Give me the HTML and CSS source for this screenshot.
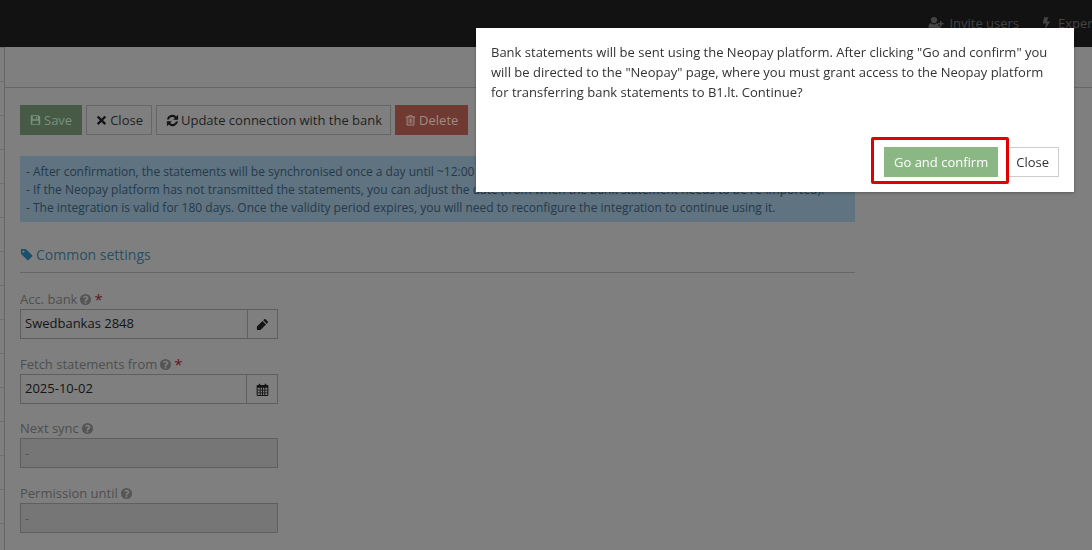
FILE: index.html
```html
<!DOCTYPE html>
<html lang="en">
<head>
<meta charset="utf-8">
<title>Bank integration</title>
<link rel="stylesheet" href="styles.css">
</head>
<body>
<svg class="sprites" aria-hidden="true">
  <symbol id="i-save" viewBox="0 0 14 14"><path fill-rule="evenodd" d="M1 1h10l2 2v10H1zM3.500 2v4h6.500V2zM7.500 2.700h1.500v2.600H7.500zM3 8v4h8V8z"/></symbol>
  <symbol id="i-times" viewBox="0 0 14 14"><path d="M3.200 1.500 7 5.300l3.800-3.800 2.100 2.100L9.100 7.400l3.800 3.800-2.100 2.100L7 9.500l-3.800 3.800-2.100-2.100 3.800-3.800-3.800-3.800z"/></symbol>
  <symbol id="i-refresh" viewBox="0 0 14 14"><path d="M13 .8v5.400H7.600l2-2A4 4 0 0 0 3.200 5.800H.9a6.200 6.200 0 0 1 10.300-3.200zM1 13.200V7.800h5.400l-2 2a4 4 0 0 0 6.400-1.600h2.300a6.200 6.200 0 0 1-10.300 3.200z"/></symbol>
  <symbol id="i-trash" viewBox="0 0 14 14"><path fill-rule="evenodd" d="M5 .8h4l1 1.700h3v1.300h-1V13a1 1 0 0 1-1 1H3a1 1 0 0 1-1-1V3.800H1V2.500h3zM5.700 1.800l-.4.700h3.400l-.4-.7zM3.300 3.800v8.900h7.400V3.800zM4.700 5.200h1v6.200h-1zM6.500 5.200h1v6.200h-1zM8.300 5.200h1v6.200h-1z"/></symbol>
  <symbol id="i-tag" viewBox="0 0 14 14"><path fill-rule="evenodd" d="M1 1h5.200l6.800 6.800a1 1 0 0 1 0 1.400l-3.800 3.800a1 1 0 0 1-1.400 0L1 6.200zM3.800 2.600a1.200 1.200 0 1 0 0 2.400 1.200 1.200 0 0 0 0-2.400z"/></symbol>
  <symbol id="i-help" viewBox="0 0 14 14"><path fill-rule="evenodd" d="M7 1a6 6 0 1 1 0 12A6 6 0 0 1 7 1zM6 9.500v1.700h1.900V9.500zM7.100 3C5.800 3 4.900 3.600 4.300 4.600l1.200.9c.4-.5.800-.9 1.500-.9.600 0 1 .3 1 .8 0 .5-.4.800-.9 1.100C6.500 6.900 6 7.400 6 8.200v.6h1.900c0-.6.300-.9.900-1.200.7-.4 1.300-1 1.300-2.100C10.100 4 8.700 3 7.100 3z"/></symbol>
  <symbol id="i-pencil" viewBox="0 0 14 14"><path d="M10.300 1.300 12.700 3.700a1 1 0 0 1 0 1.400l-1.100 1.100L7.800 2.400l1.100-1.100a1 1 0 0 1 1.400 0zM7 3.200l3.800 3.800-6 6H1v-3.800z"/></symbol>
  <symbol id="i-calendar" viewBox="0 0 14 14"><path fill-rule="evenodd" d="M3 .8h1.600v1.300h4.800V.8H11v1.300h1.300a1 1 0 0 1 1 1V13a1 1 0 0 1-1 1H1.700a1 1 0 0 1-1-1V3.100a1 1 0 0 1 1-1H3zM1.800 5.200v2h2.200v-2zM5 5.200v2h1.500v-2zM7.500 5.200v2H9v-2zM10 5.200v2h2.200v-2zM1.800 8.100v2h2.200v-2zM5 8.100v2h1.500v-2zM7.500 8.100v2H9v-2zM10 8.100v2h2.200v-2zM1.800 11v2h2.200v-2zM5 11v2h1.500v-2zM7.500 11v2H9v-2zM10 11v2h2.200v-2z"/></symbol>
  <symbol id="i-user-plus" viewBox="0 0 16 14"><path d="M6 1a3 3 0 1 1 0 6.200A3 3 0 0 1 6 1zM3.200 7.200C4 8 5 8.400 6 8.400s2-.4 2.800-1.200c.6 0 1.100.3 1.400.7v2h2.300v1.500c-.3 1-1 1.600-2 1.600H2.500c-1.200 0-2-.7-2-1.900 0-1.900.6-3.900 2.700-3.900zM12 5h1.500v2H15.500v1.500h-2v2H12v-2h-2V7h2z"/></symbol>
  <symbol id="i-bolt" viewBox="0 0 10 14"><path d="M2.500 0h4.800L5.300 4.700h3.900L3 14l1.700-7H.8z"/></symbol>
</svg>

<div class="page">
  <header class="topbar">
    <a class="topbar-link"><svg class="ic-user"><use href="#i-user-plus"/></svg>Invite users</a>
    <a class="topbar-link"><svg class="ic-bolt"><use href="#i-bolt"/></svg>Expenses</a>
  </header>
  <div class="shell">
    <div class="rail"></div>
    <div class="workspace">
      <div class="subbar"></div>
      <main class="content">
        <div class="toolbar">
          <button class="btn btn-save"><svg class="ic"><use href="#i-save"/></svg>Save</button>
          <button class="btn btn-plain"><svg class="ic ic-dark"><use href="#i-times"/></svg>Close</button>
          <button class="btn btn-plain"><svg class="ic ic-dark ic-wide"><use href="#i-refresh"/></svg>Update connection with the bank</button>
          <button class="btn btn-delete"><svg class="ic"><use href="#i-trash"/></svg>Delete</button>
        </div>
        <div class="alert">
          <div>- After confirmation, the statements will be synchronised once a day until ~12:00</div>
          <div>- If the Neopay platform has not transmitted the statements, you can adjust the date (from when the bank statement needs to be re-imported).</div>
          <div>- The integration is valid for 180 days. Once the validity period expires, you will need to reconfigure the integration to continue using it.</div>
        </div>
        <h2 class="section"><svg class="ic-tag"><use href="#i-tag"/></svg>Common settings</h2>
        <div class="field">
          <label class="label">Acc. bank<svg class="ic-help"><use href="#i-help"/></svg><span class="req">*</span></label>
          <div class="input-group"><span class="input">Swedbankas 2848</span><span class="addon"><svg class="ic-addon"><use href="#i-pencil"/></svg></span></div>
        </div>
        <div class="field">
          <label class="label">Fetch statements from<svg class="ic-help"><use href="#i-help"/></svg><span class="req">*</span></label>
          <div class="input-group"><span class="input">2025-10-02</span><span class="addon addon-wide"><svg class="ic-addon"><use href="#i-calendar"/></svg></span></div>
        </div>
        <div class="field field-tight">
          <label class="label">Next sync<svg class="ic-help"><use href="#i-help"/></svg></label>
          <div class="input-group input-group-off"><span class="input input-off">-</span></div>
        </div>
        <div class="field">
          <label class="label">Permission until<svg class="ic-help"><use href="#i-help"/></svg></label>
          <div class="input-group input-group-off"><span class="input input-off">-</span></div>
        </div>
      </main>
    </div>
  </div>
</div>

<div class="modal">
  <p class="modal-text">Bank statements will be sent using the Neopay platform. After clicking "Go and confirm" you will be directed to the "Neopay" page, where you must grant access to the Neopay platform for transferring bank statements to B1.lt. Continue?</p>
  <div class="modal-footer">
    <button class="btn btn-confirm">Go and confirm<span class="marker"></span></button>
    <button class="btn btn-close">Close</button>
  </div>
</div>
</body>
</html>
```

FILE: styles.css
```css
* { box-sizing: border-box; }
html, body { margin: 0; height: 100%; overflow: hidden; }
body {
  font-family: "Open Sans", sans-serif;
  font-size: 13px;
  line-height: 20px;
  color: #1a1a1a;
  background: #7f7f7f;
}
.sprites { display: none; }
.page { height: 550px; overflow: hidden; }

.topbar {
  height: 47px;
  background: #121212;
  display: flex;
  justify-content: flex-end;
  align-items: center;
  padding-bottom: 1px;
  overflow: hidden;
  white-space: nowrap;
  margin-right: -23px;
}
.topbar-link { color: #444; display: flex; align-items: center; margin-left: 23px; }
.ic-user { width: 16px; height: 14px; margin-right: 5px; fill: #444; }
.ic-bolt { width: 9px; height: 13px; margin-right: 7px; fill: #444; }

.shell { display: flex; }
.rail {
  width: 5px;
  height: 503px;
  flex: none;
  border-right: 1px solid #666;
  background: linear-gradient(to bottom, transparent 33px, #6e6e6e 33px) 0 1px / 100% 34px;
}
.workspace { flex: 1; }
.subbar { height: 41px; border-bottom: 1px solid #666; }
.content { padding: 17px 0 0 15px; width: 850px; }

.toolbar { display: flex; gap: 4px; }
.btn {
  font: inherit;
  height: 30px;
  padding: 0 9px;
  display: flex;
  align-items: center;
  border: 1px solid #666;
  background: transparent;
  color: #1f1f1f;
  white-space: nowrap;
}
.btn-plain { padding-right: 8px; }
.btn-save { background: #465a45; border-color: #465a45; color: #7c917c; }
.btn-delete { background: #6e3a31; border-color: #6e3a31; color: #a38a86; }
.btn .ic { width: 11px; height: 12px; margin-right: 3px; fill: currentColor; flex: none; }
.btn .ic-dark { fill: #141414; }
.btn .ic-wide { width: 13px; height: 13px; margin-right: 2px; }

.alert {
  margin-top: 21px;
  height: 66px;
  padding: 7px 6px 0;
  font-size: 12px;
  line-height: 18px;
  background: #5f7380;
  color: #26394a;
  white-space: nowrap;
  overflow: hidden;
}

.section {
  margin: 20px 0 0;
  padding-bottom: 5px;
  height: 31px;
  border-bottom: 1px solid #666;
  font-size: 14px;
  font-weight: 400;
  line-height: 24px;
  color: #284f63;
  display: flex;
  align-items: center;
}
.ic-tag { width: 13px; height: 13px; margin-right: 3px; fill: #1b4f6b; flex: none; }

.field { margin-top: 15px; }
.field-tight { margin-top: 14px; }
.section + .field { margin-top: 16px; }
.label { display: flex; align-items: center; height: 20px; color: #4e4e4e; }
.ic-help { width: 13px; height: 13px; margin-left: 2px; fill: #555; }
.req { color: #631620; margin-left: 2px; font-size: 15px; line-height: 20px; }
.input-group { display: flex; width: 258px; height: 30px; border: 1px solid #5f5f5f; }
.input-group-off { background: #767676; }
.input { flex: 1; padding: 0 4px; line-height: 26px; color: #141414; }
.input-off { color: #555; line-height: 28px; }
.addon { width: 30px; border-left: 1px solid #5f5f5f; display: flex; align-items: center; justify-content: center; }
.addon-wide { width: 31px; }
.ic-addon { width: 13px; height: 13px; fill: #141414; }

.modal {
  position: fixed;
  left: 476px;
  top: 28px;
  width: 598px;
  height: 164px;
  background: #fff;
  padding: 15px;
  display: flex;
  flex-direction: column;
  justify-content: space-between;
  box-shadow: 0 1px 3px rgba(0, 0, 0, .3);
}
.modal-text { margin: 0; line-height: 19.900px; color: #333; }
.modal-footer { display: flex; justify-content: flex-end; gap: 8px; }
.btn-confirm { position: relative; background: #8ab783; border-color: #8ab783; color: #fff; }
.btn-close { border-color: #ccc; color: #333; }
.marker {
  position: absolute;
  left: -14px;
  top: -11px;
  width: 138px;
  height: 47px;
  border: 3px solid #e00000;
  border-radius: 2px;
  pointer-events: none;
}
```
